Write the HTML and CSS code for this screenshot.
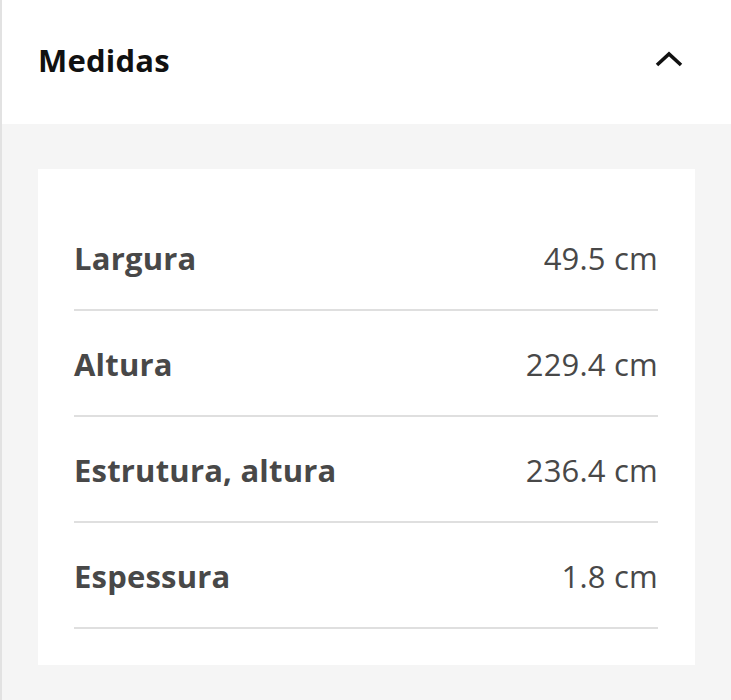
FILE: index.html
```html
<!DOCTYPE html>
<html lang="pt">
<head>
<meta charset="utf-8">
<link rel="stylesheet" href="styles.css">
</head>
<body>
<div class="panel">
  <div class="header">
    <h2 class="title">Medidas</h2>
    <svg class="chevron" width="28" height="16" viewBox="0 0 28 16" aria-hidden="true">
      <path d="M2 14 L14 3 L26 14" fill="none" stroke="#111" stroke-width="3.6" stroke-linejoin="miter"/>
    </svg>
  </div>
  <div class="body">
    <div class="card">
      <div class="row"><span class="label">Largura</span><span class="value">49.5 cm</span></div>
      <div class="row"><span class="label">Altura</span><span class="value">229.4 cm</span></div>
      <div class="row"><span class="label">Estrutura, altura</span><span class="value">236.4 cm</span></div>
      <div class="row"><span class="label">Espessura</span><span class="value">1.8 cm</span></div>
    </div>
  </div>
</div>
</body>
</html>
```
FILE: styles.css
```css
html, body {
  margin: 0;
  padding: 0;
  background: #f5f5f5;
}
body {
  font-family: "Open Sans", "Noto Sans", sans-serif;
  width: 731px;
  height: 700px;
  overflow: hidden;
}
.panel {
  border-left: 2px solid #e2e2e2;
  height: 700px;
  box-sizing: border-box;
}
.header {
  background: #fff;
  height: 124px;
  display: flex;
  align-items: center;
  justify-content: space-between;
  padding: 0 48px 4px 36px;
  box-sizing: border-box;
}
.title {
  margin: 0;
  font-size: 31px;
  font-weight: 700;
  color: #111;
  letter-spacing: 0.2px;
}
.chevron {
  display: block;
  margin-top: -2px;
}
.body {
  padding: 45px 36px 0 36px;
}
.card {
  background: #fff;
  padding: 36px 37px 36px 36px;
}
.row {
  height: 106px;
  box-sizing: border-box;
  border-bottom: 2px solid #dfdfdf;
  display: flex;
  align-items: center;
  justify-content: space-between;
  color: #484848;
  font-size: 31px;
  letter-spacing: 0.2px;
  padding-top: 2px;
}
.label {
  font-weight: 700;
}
.value {
  font-weight: 400;
}
```
